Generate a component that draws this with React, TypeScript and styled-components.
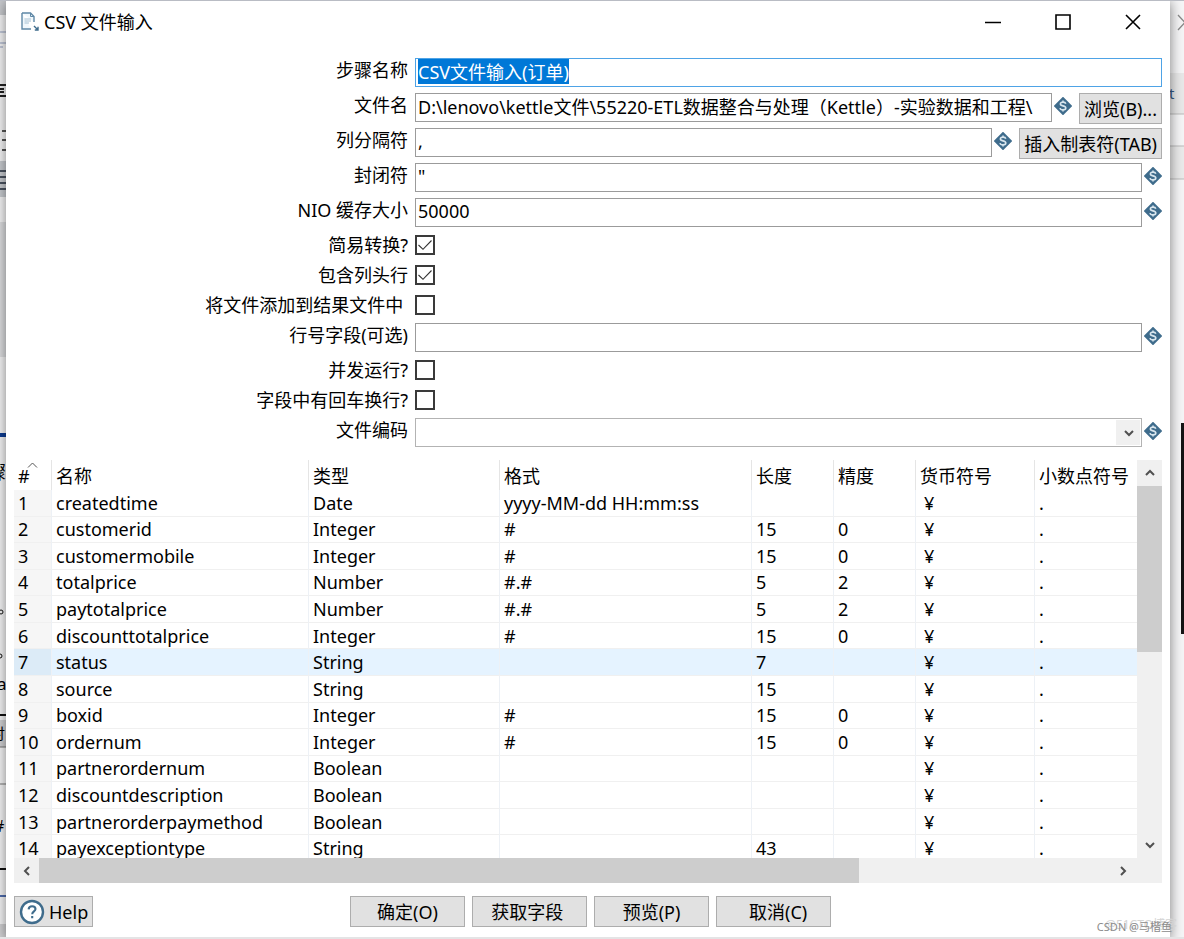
import React, { useEffect, useRef } from "react";
import styled, { createGlobalStyle } from "styled-components";

const GlobalStyle = createGlobalStyle`
  *, *::before, *::after { box-sizing: border-box; }
  body {
    margin: 0;
    background: #f6f6f7;
    color: #000;
    font-family: "Noto Sans", "Noto Sans CJK SC", sans-serif;
    font-size: 18px;
    line-height: 24px;
  }
  button, input, select { font: inherit; color: inherit; }
`;

const Desktop = styled.div`
  display: grid;
  grid-template-columns: 6px minmax(0, 1fr) 14px;
  height: 100vh;
  min-height: 700px;
  overflow: hidden;
  position: relative;
  border-top: 1px solid #b9bcc4;
  border-bottom: 2px solid #e4e4e5;
`;

const Strip = styled.svg`
  display: block;
  width: 100%;
  height: 938px;
`;

const Dialog = styled.main`
  display: flex;
  flex-direction: column;
  min-height: 0;
  background: #fff;
  box-shadow: 0 1px 12px rgba(0, 0, 0, 0.5);
  position: relative;
`;

const TitleBar = styled.header`
  display: flex;
  align-items: center;
  height: 42px;
  padding: 0 2px 0 15px;
  gap: 5px;
`;

const Title = styled.h1`
  flex: 1;
  margin: 0;
  font-size: 18px;
  font-weight: 400;
`;

const ControlGroup = styled.div`
  display: flex;
`;

const WindowButton = styled.button`
  display: grid;
  place-items: center;
  width: 70px;
  height: 42px;
  padding: 0;
  border: 0;
  background: none;
`;

const Form = styled.form`
  display: flex;
  flex: 1;
  flex-direction: column;
  min-height: 0;
  padding: 15px 8px 9px;
`;

const Row = styled.div<{ $compact?: boolean }>`
  display: grid;
  flex: none;
  grid-template-columns: minmax(0, 401fr) minmax(0, 747fr);
  height: ${(p) => (p.$compact ? 30 : 35)}px;
`;

const Label = styled.label`
  padding-right: 7px;
  text-align: right;
  white-space: pre;
`;

const Field = styled.div`
  display: flex;
  align-items: flex-start;
  gap: 2px;
  min-width: 0;
`;

const TextInput = styled.input<{ $active?: boolean }>`
  flex: 1;
  min-width: 0;
  height: 29px;
  padding: 0 2px 3px;
  border: 1px solid ${(p) => (p.$active ? "#4ea3e6" : "#9b9b9b")};
  border-radius: 0;
  outline: 0;
  background: #fff;
  &::selection { background: #0078d7; color: #fff; }
`;

const CheckBox = styled.input`
  appearance: none;
  width: 20px;
  height: 20px;
  margin: 2px 0 0;
  border: 2px solid #3a3a3a;
  background: #fff;
  &:checked {
    background: #fff
      url("data:image/svg+xml,%3Csvg xmlns='http://www.w3.org/2000/svg' viewBox='0 0 16 16'%3E%3Cpath d='M1.5 8L6 12.3L14.5 3.5' fill='none' stroke='%23333' stroke-width='1.1'/%3E%3C/svg%3E");
  }
`;

const SelectBox = styled.div`
  display: flex;
  flex: 1;
  position: relative;
  min-width: 0;
`;

const Select = styled.select`
  appearance: none;
  width: 100%;
  height: 29px;
  border: 1px solid #b3b3b3;
  border-radius: 0;
  background: linear-gradient(#f0f0f0, #f0f0f0) right 1px center / 24px 25px no-repeat #fff;
`;

const SelectArrow = styled.span`
  position: absolute;
  top: 0;
  right: 1px;
  display: grid;
  place-items: center;
  width: 25px;
  height: 29px;
  pointer-events: none;
`;

const PushButton = styled.button<{ $wide?: boolean }>`
  display: flex;
  flex: none;
  align-items: center;
  justify-content: center;
  gap: 4px;
  width: ${(p) => (p.$wide ? "115px" : "auto")};
  height: 31px;
  padding: 0 4px;
  border: 1px solid #adadad;
  background: #e1e1e1;
  white-space: pre;
`;

const VariableMark = styled.svg`
  flex: none;
  width: 18px;
  height: 18px;
  margin-top: 4px;
  & + button { margin-left: 5px; }
`;

const TableFrame = styled.section`
  display: grid;
  flex: 1;
  grid-template-columns: minmax(0, 1fr) 25px;
  grid-template-rows: minmax(0, 1fr) 25px;
  min-height: 0;
  margin-top: 7px;
`;

const TableView = styled.div`
  overflow: hidden;
`;

const Table = styled.table`
  width: 100%;
  height: 402px;
  border-collapse: separate;
  border-spacing: 0;
  table-layout: fixed;
  line-height: 22px;
`;

const HeadCell = styled.th<{ $width?: number }>`
  position: relative;
  width: ${(p) => (p.$width ? `${p.$width}px` : "auto")};
  height: 30px;
  padding: 2px 0 0 4px;
  border-right: 1px solid #e5e5e5;
  font-weight: 400;
  text-align: left;
  white-space: nowrap;
  &:last-child { border-right: 0; }
`;

const SortMark = styled.svg`
  position: absolute;
  top: 2px;
  right: 13px;
  width: 11px;
  height: 6px;
`;

const BodyRow = styled.tr<{ $current?: boolean }>`
  background: ${(p) => (p.$current ? "#e5f3ff" : "#fff")};
  & > :first-child { background: ${(p) => (p.$current ? "#dcebf7" : "#f6f6f6")}; }
`;

const Cell = styled.td<{ $indent?: boolean }>`
  padding: 0 0 0 ${(p) => (p.$indent ? 8 : 4)}px;
  border-right: 1px solid #edf1f6;
  border-bottom: 1px solid #f0f0f0;
  white-space: nowrap;
  &:last-child { border-right: 0; }
`;

const VerticalBar = styled.div`
  display: flex;
  flex-direction: column;
  background: #f0f0f0;
`;

const HorizontalBar = styled.div`
  display: flex;
  grid-column: 1 / -1;
  padding-right: 27px;
  background: #f0f0f0;
`;

const ArrowButton = styled.button`
  display: grid;
  flex: none;
  place-items: center;
  width: 25px;
  height: 26px;
  padding: 0;
  border: 0;
  background: none;
`;

const Track = styled.div`
  display: flex;
  flex: 1;
  flex-direction: inherit;
  min-height: 0;
`;

const Thumb = styled.div<{ $share: number }>`
  flex: 0 0 ${(p) => p.$share}%;
  background: #cdcdcd;
`;

const Footer = styled.footer`
  display: grid;
  flex: none;
  grid-template-columns: 1fr auto 1fr;
  padding: 13px 0 3px;
  margin-right: -5px;
`;

const HelpSlot = styled.div`
  display: flex;
`;

const Actions = styled.div`
  display: flex;
  gap: 7px;
`;

const Watermark = styled.div<{ $back?: boolean }>`
  position: absolute;
  right: ${(p) => (p.$back ? 7 : 12)}px;
  bottom: ${(p) => (p.$back ? 2 : 0)}px;
  color: ${(p) => (p.$back ? "#d4d4d4" : "#8c8c8c")};
  font-size: ${(p) => (p.$back ? 12 : 11)}px;
  line-height: 20px;
  white-space: nowrap;
`;

const Variable = () => (
  <VariableMark viewBox="0 0 18 18" aria-hidden="true">
    <path d="M9 0.8L17.2 9L9 17.2L0.8 9Z" fill="#3f6c8c" stroke="#3f6c8c" strokeWidth="1.6" strokeLinejoin="round" />
    <path
      d="M11.8 6.7C11.5 5.6 10.4 5.1 9 5.1C7.4 5.1 6.4 5.8 6.4 6.9C6.4 9.5 11.8 8.2 11.8 11C11.8 12.2 10.7 12.9 9 12.9C7.4 12.9 6.3 12.3 6 11.1M9 3.5V5M9 13V14.5"
      fill="none"
      stroke="#d9e6ee"
      strokeWidth="1.6"
    />
  </VariableMark>
);

type Direction = "up" | "down" | "left" | "right";
const turns: Record<Direction, number> = { up: 0, right: 90, down: 180, left: 270 };

const Chevron = ({ to }: { to: Direction }) => (
  <svg width="12" height="12" viewBox="0 0 12 12" aria-hidden="true">
    <path
      d="M2 8L6 4L10 8"
      transform={`rotate(${turns[to]} 6 6)`}
      fill="none"
      stroke="#505050"
      strokeWidth="2"
    />
  </svg>
);

const LeftStrip = () => (
  <Strip aria-hidden="true">
    <rect width="6" height="14" fill="#c9cbcf" />
    <path d="M0 31H6M0 42H6M0 46H3" stroke="#8e9bbb" />
    <path d="M0 84H6M0 88H4M0 91H4M0 95H6" stroke="#222" strokeWidth="2" />
    <path d="M2 130H6M2 139H6M2 149H6" stroke="#222" strokeWidth="1.5" />
    <rect y="160" width="6" height="36" fill="#c9ccd1" />
    <path d="M0 170H6M0 176H6M0 182H6M0 188H6" stroke="#222c3c" strokeWidth="1.5" />
    <rect y="221" width="6" height="135" fill="#dedfe1" />
    <rect y="432" width="6" height="4" fill="#0c3c94" />
    <text x="-12" y="478" fontSize="18">骤</text>
    <circle cx="1" cy="611" r="2" fill="none" stroke="#111" />
    <circle cx="0" cy="655" r="2" fill="none" stroke="#111" />
    <text x="-3" y="689" fontSize="17">a</text>
    <path d="M0 714H6" stroke="#111" strokeWidth="2" />
    <rect y="719" width="6" height="27" fill="#d2d2d4" />
    <text x="-10" y="738" fontSize="15">时</text>
    <path d="M0 746H6M0 783H6" stroke="#777" />
    <text x="-6" y="831" fontSize="16">#</text>
    <path d="M0 868H6" stroke="#111" strokeWidth="2" />
    <path d="M0 895H6" stroke="#173f96" strokeWidth="1.5" />
    <rect y="923" width="6" height="16" fill="#d2d2d4" />
  </Strip>
);

const RightStrip = () => (
  <Strip aria-hidden="true">
    <path d="M8 14L15 21.5L8 29" fill="none" stroke="#8a8a8a" strokeWidth="1.3" />
    <rect y="72" width="14" height="41" fill="#e9e9e9" />
    <text x="-1" y="98" fontSize="15" fill="#365a86">t</text>
    <path d="M0 113H14" stroke="#bbb" />
    <rect y="145" width="14" height="33" fill="#ebebeb" />
    <path d="M0 145H14M0 178H14" stroke="#bbb" />
    <rect x="11" y="422" width="3" height="211" fill="#151515" />
  </Strip>
);

const WindowControls = () => (
  <ControlGroup>
    <WindowButton type="button" aria-label="Minimize">
      <svg width="16" height="16" viewBox="0 0 16 16">
        <path d="M0 8.5H16" stroke="#000" strokeWidth="1.5" />
      </svg>
    </WindowButton>
    <WindowButton type="button" aria-label="Maximize">
      <svg width="16" height="16" viewBox="0 0 16 16">
        <path d="M1 1H15V15H1Z" fill="none" stroke="#000" strokeWidth="1.6" />
      </svg>
    </WindowButton>
    <WindowButton type="button" aria-label="Close">
      <svg width="16" height="16" viewBox="0 0 16 16">
        <path d="M1 1L15 15M15 1L1 15" stroke="#000" strokeWidth="1.6" />
      </svg>
    </WindowButton>
  </ControlGroup>
);

const columns: { title: string; width?: number }[] = [
  { title: "#", width: 38 },
  { title: "名称", width: 257 },
  { title: "类型", width: 191 },
  { title: "格式", width: 252 },
  { title: "长度", width: 82 },
  { title: "精度", width: 82 },
  { title: "货币符号", width: 119 },
  { title: "小数点符号" },
];

const fields: [string, string, string, string, string][] = [
  ["createdtime", "Date", "yyyy-MM-dd HH:mm:ss", "", ""],
  ["customerid", "Integer", "#", "15", "0"],
  ["customermobile", "Integer", "#", "15", "0"],
  ["totalprice", "Number", "#.#", "5", "2"],
  ["paytotalprice", "Number", "#.#", "5", "2"],
  ["discounttotalprice", "Integer", "#", "15", "0"],
  ["status", "String", "", "7", ""],
  ["source", "String", "", "15", ""],
  ["boxid", "Integer", "#", "15", "0"],
  ["ordernum", "Integer", "#", "15", "0"],
  ["partnerordernum", "Boolean", "", "", ""],
  ["discountdescription", "Boolean", "", "", ""],
  ["partnerorderpaymethod", "Boolean", "", "", ""],
  ["payexceptiontype", "String", "", "43", ""],
];

const CheckRow = ({ id, label, checked }: { id: string; label: string; checked?: boolean }) => (
  <Row $compact>
    <Label htmlFor={id}>{label}</Label>
    <Field>
      <CheckBox id={id} type="checkbox" defaultChecked={checked} />
    </Field>
  </Row>
);

const TextRow = ({
  id,
  label,
  value = "",
  action,
}: {
  id: string;
  label: string;
  value?: string;
  action?: string;
}) => (
  <Row>
    <Label htmlFor={id}>{label}</Label>
    <Field>
      <TextInput id={id} defaultValue={value} />
      <Variable />
      {action && <PushButton type="button">{action}</PushButton>}
    </Field>
  </Row>
);

export default function App() {
  const stepName = useRef<HTMLInputElement>(null);

  useEffect(() => {
    stepName.current?.focus();
    stepName.current?.select();
  }, []);

  return (
    <>
      <GlobalStyle />
      <Desktop>
        <LeftStrip />
        <Dialog>
          <TitleBar>
            <svg width="18" height="20" viewBox="0 0 18 20" aria-hidden="true">
              <path d="M1 1H9.5L13 4.5V10M10 17H1V1" fill="#f1f8fc" stroke="#5f88a6" strokeWidth="1.4" />
              <path d="M9.5 1V4.5H13" fill="none" stroke="#5f88a6" />
              <path d="M3.5 7H10M3.5 9H10M3.5 11H8" stroke="#a5c0d2" />
              <path d="M13 14L17 18M17 14.8V18H13.8" fill="none" stroke="#3f6c8c" strokeWidth="1.4" />
            </svg>
            <Title>CSV 文件输入</Title>
            <WindowControls />
          </TitleBar>
          <Form onSubmit={(e) => e.preventDefault()}>
            <Row>
              <Label htmlFor="step">步骤名称</Label>
              <Field>
                <TextInput ref={stepName} id="step" $active defaultValue="CSV文件输入(订单)" />
              </Field>
            </Row>
            <TextRow
              id="file"
              label="文件名"
              value="D:\lenovo\kettle文件\55220-ETL数据整合与处理（Kettle）-实验数据和工程\"
              action="浏览(B)..."
            />
            <TextRow id="separator" label="列分隔符" value="," action="插入制表符(TAB)" />
            <TextRow id="enclosure" label="封闭符" value={'"'} />
            <TextRow id="buffer" label="NIO 缓存大小" value="50000" />
            <CheckRow id="lazy" label="简易转换?" checked />
            <CheckRow id="header" label="包含列头行" checked />
            <CheckRow id="result" label="将文件添加到结果文件中 " />
            <TextRow id="rownum" label="行号字段(可选)" />
            <CheckRow id="parallel" label="并发运行?" />
            <CheckRow id="newline" label="字段中有回车换行?" />
            <Row>
              <Label htmlFor="encoding">文件编码</Label>
              <Field>
                <SelectBox>
                  <Select id="encoding" defaultValue="">
                    <option value=""></option>
                  </Select>
                  <SelectArrow>
                    <Chevron to="down" />
                  </SelectArrow>
                </SelectBox>
                <Variable />
              </Field>
            </Row>

            <TableFrame>
              <TableView>
                <Table>
                  <thead>
                    <tr>
                      {columns.map((column, i) => (
                        <HeadCell key={column.title} $width={column.width} scope="col">
                          {column.title}
                          {i === 0 && (
                            <SortMark viewBox="0 0 11 6" aria-hidden="true">
                              <path d="M1 5.5L5.5 1L10 5.5" fill="none" stroke="#555" />
                            </SortMark>
                          )}
                        </HeadCell>
                      ))}
                    </tr>
                  </thead>
                  <tbody>
                    {fields.map((field, i) => (
                      <BodyRow key={field[0]} $current={i === 6}>
                        <Cell>{i + 1}</Cell>
                        {field.map((value, j) => (
                          <Cell key={j}>{value}</Cell>
                        ))}
                        <Cell $indent>¥</Cell>
                        <Cell>.</Cell>
                      </BodyRow>
                    ))}
                  </tbody>
                </Table>
              </TableView>
              <VerticalBar>
                <ArrowButton type="button" aria-label="Scroll up">
                  <Chevron to="up" />
                </ArrowButton>
                <Track>
                  <Thumb $share={48} />
                </Track>
                <ArrowButton type="button" aria-label="Scroll down">
                  <Chevron to="down" />
                </ArrowButton>
              </VerticalBar>
              <HorizontalBar>
                <ArrowButton type="button" aria-label="Scroll left">
                  <Chevron to="left" />
                </ArrowButton>
                <Track>
                  <Thumb $share={76.6} />
                </Track>
                <ArrowButton type="button" aria-label="Scroll right">
                  <Chevron to="right" />
                </ArrowButton>
              </HorizontalBar>
            </TableFrame>

            <Footer>
              <HelpSlot>
                <PushButton type="button">
                  <svg width="26" height="26" viewBox="0 0 26 26" aria-hidden="true">
                    <circle cx="13" cy="13" r="11" fill="#fff" stroke="#3f6c8c" strokeWidth="2.4" />
                    <path
                      d="M9.6 10.4C9.8 8.3 11.2 7.3 13.1 7.3C15.1 7.3 16.5 8.4 16.5 10.1C16.5 12.4 13.2 12.5 13.2 15.2M13.2 17V19.2"
                      fill="none"
                      stroke="#3f6c8c"
                      strokeWidth="2.1"
                    />
                  </svg>
                  Help
                </PushButton>
              </HelpSlot>
              <Actions>
                <PushButton type="button" $wide>确定(O)</PushButton>
                <PushButton type="button" $wide>{"获取字段 "}</PushButton>
                <PushButton type="button" $wide>预览(P)</PushButton>
                <PushButton type="button" $wide>{"  取消(C)"}</PushButton>
              </Actions>
            </Footer>
          </Form>
        </Dialog>
        <RightStrip />
        <Watermark $back>@51CTO博客</Watermark>
        <Watermark>CSDN @马楷鱼</Watermark>
      </Desktop>
    </>
  );
}
